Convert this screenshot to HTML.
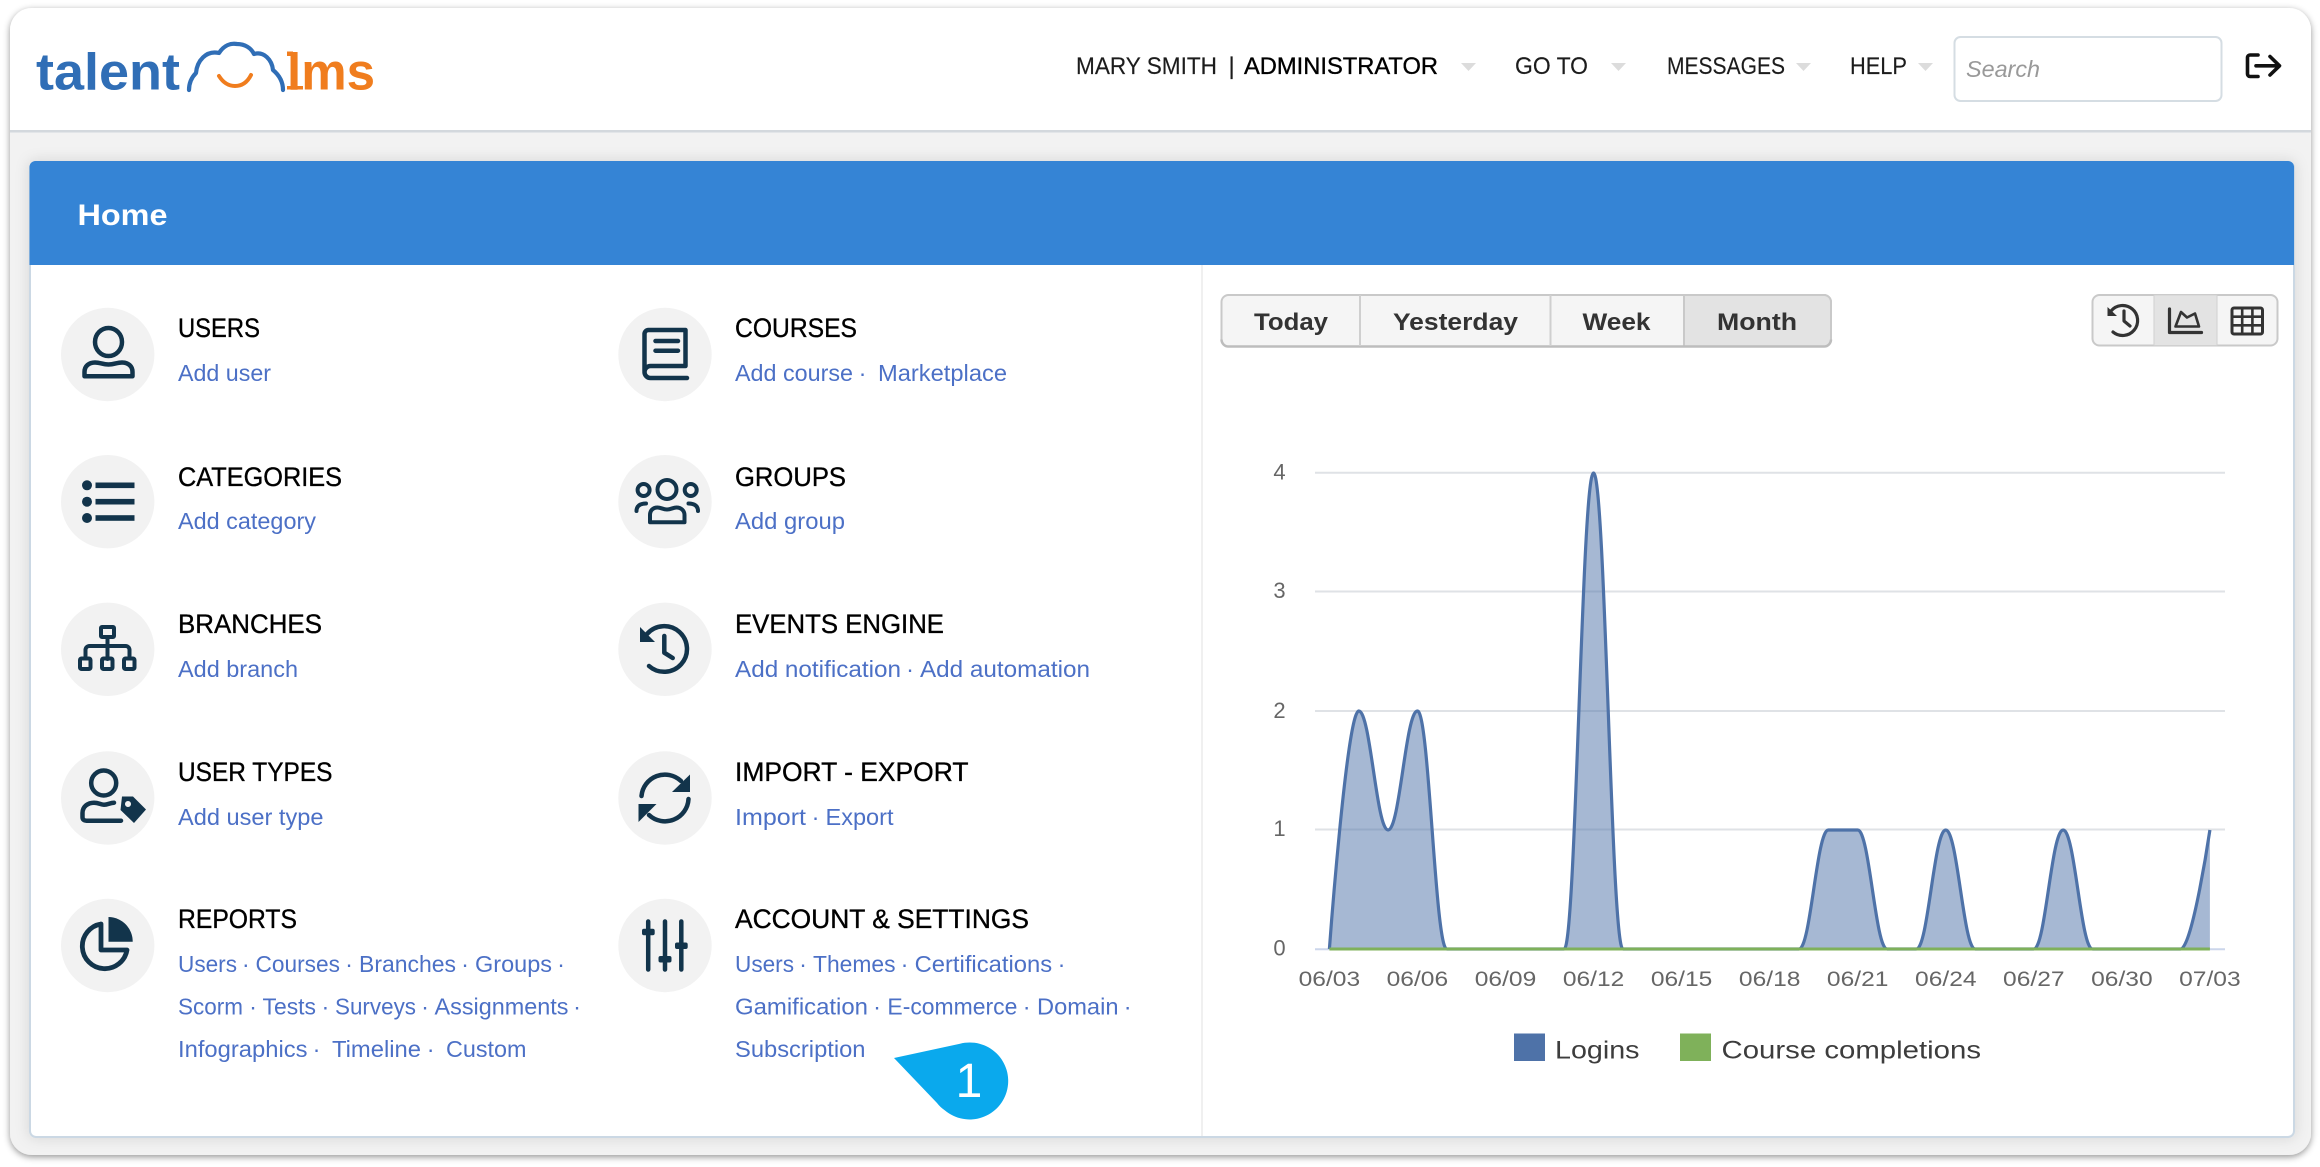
<!DOCTYPE html>
<html lang="en">
<head>
<meta charset="utf-8">
<title>TalentLMS Home</title>
<style>
html,body{margin:0;padding:0;background:#fff;width:2320px;height:1167px;overflow:hidden}
svg{display:block}
text{font-family:"Liberation Sans",Arial,sans-serif}
.t{font-size:26.5px;fill:#000;stroke:#000;stroke-width:.35px}
.l{font-size:23.5px;fill:#4c70c6}
.d{font-size:23.5px;fill:#4c70c6;text-anchor:middle}
.h{font-size:24.5px;fill:#1c1c1c;stroke:#1c1c1c;stroke-width:.15px}
.b{font-size:24px;font-weight:700;fill:#333}
.a{font-size:21px;fill:#666;text-anchor:middle}
.y{font-size:22px;fill:#666;text-anchor:middle}
.g{font-size:25px;fill:#3d3d3d}
.ic{fill:none;stroke:#12344b;stroke-width:4.5;stroke-linecap:round;stroke-linejoin:round}
.if{fill:#12344b;stroke:none}
.circ{fill:#f2f2f2}
.sm{fill:none;stroke:#333;stroke-width:3.2;stroke-linecap:round;stroke-linejoin:round}
</style>
</head>
<body>
<svg xmlns="http://www.w3.org/2000/svg" width="2320" height="1167" viewBox="0 0 2320 1167">
<defs>
<filter id="ws" x="-2%" y="-3%" width="104%" height="106%"><feDropShadow dx="0" dy="2" stdDeviation="3.5" flood-color="#000" flood-opacity=".42"/></filter>
<filter id="ps" x="-2%" y="-4%" width="104%" height="108%"><feDropShadow dx="0" dy="0" stdDeviation="7" flood-color="#000" flood-opacity=".13"/></filter>
</defs>

<!-- window -->
<rect x="10" y="8" width="2301" height="1147" rx="22" fill="#f2f2f2" filter="url(#ws)"/>
<path d="M10 130V30a22 22 0 0 1 22-22H2289a22 22 0 0 1 22 22V130Z" fill="#fff"/>
<rect x="10" y="130" width="2301" height="2.5" fill="#d3d8dd"/>

<!-- logo -->
<text x="36" y="89.5" font-size="52" font-weight="700" fill="#306eb6" textLength="144" lengthAdjust="spacingAndGlyphs">talent</text>
<text x="287" y="89.5" font-size="52" font-weight="700" fill="#f07d1e" textLength="88" lengthAdjust="spacingAndGlyphs">lms</text>
<path d="M287 51.500H293V56H287ZM287 86H303V89.500H287Z" fill="#f07d1e"/>
<path d="M189 90C189 82 192 77 196 73C197 61 206 50 219 53C224 45 231 43 237 44C245 44 251 48 254 54C264 51 272 60 273 70C279 75 283 82 283 90" fill="none" stroke="#306eb6" stroke-width="4.2" stroke-linecap="round" stroke-linejoin="round"/>
<path d="M219 76C224 84 230 86 235 86C241 86 247 83 251 75" fill="none" stroke="#f07d1e" stroke-width="4" stroke-linecap="round"/>

<!-- top nav -->
<text class="h" x="1076" y="74" textLength="141" lengthAdjust="spacingAndGlyphs">MARY SMITH</text>
<text class="h" x="1231.5" y="74" text-anchor="middle" fill="#1a2a5a">|</text>
<text class="h" x="1244" y="74" textLength="194" lengthAdjust="spacingAndGlyphs" style="fill:#000;stroke:#000;stroke-width:.35px">ADMINISTRATOR</text>
<polygon points="1461,63 1476,63 1468.5,71" fill="#dcdcdc"/>
<text class="h" x="1515" y="74" textLength="73" lengthAdjust="spacingAndGlyphs">GO TO</text>
<polygon points="1611,63 1626,63 1618.5,71" fill="#dcdcdc"/>
<text class="h" x="1667" y="74" textLength="118" lengthAdjust="spacingAndGlyphs">MESSAGES</text>
<polygon points="1796,63 1811,63 1803.5,71" fill="#dcdcdc"/>
<text class="h" x="1850" y="74" textLength="57" lengthAdjust="spacingAndGlyphs">HELP</text>
<polygon points="1918,63 1933,63 1925.5,71" fill="#dcdcdc"/>
<rect x="1954.5" y="37" width="267" height="64" rx="6" fill="#fff" stroke="#d5dde3" stroke-width="2"/>
<text x="1966" y="77" font-size="23" font-style="italic" fill="#999" textLength="74" lengthAdjust="spacingAndGlyphs">Search</text>
<path d="M2258 55H2250a2.500 2.500 0 0 0-2.500 2.500V74a2.500 2.500 0 0 0 2.500 2.500H2258" fill="none" stroke="#111" stroke-width="3.600" stroke-linecap="round"/>
<path d="M2256 65.800H2279M2270 56.500L2279.500 65.800L2270 75" fill="none" stroke="#111" stroke-width="3.600" stroke-linecap="round" stroke-linejoin="round"/>

<!-- panel -->
<rect x="30" y="162" width="2264" height="975" rx="6" fill="#fff" stroke="#cbd8e4" stroke-width="2" filter="url(#ps)"/>
<path d="M29.500 265V167a6 6 0 0 1 6-6H2288a6 6 0 0 1 6 6V265Z" fill="#3584d5"/>
<text x="77.500" y="225" font-size="30" font-weight="700" fill="#fff" textLength="90" lengthAdjust="spacingAndGlyphs">Home</text>
<rect x="1201" y="265" width="2" height="871" fill="#f0f0f0"/>

<!-- icon circles -->
<g class="circ">
<circle cx="107.700" cy="354.500" r="46.700"/><circle cx="107.700" cy="501.700" r="46.700"/><circle cx="107.700" cy="649.300" r="46.700"/><circle cx="107.700" cy="798" r="46.700"/><circle cx="107.700" cy="945.500" r="46.700"/>
<circle cx="665" cy="354.500" r="46.700"/><circle cx="665" cy="501.700" r="46.700"/><circle cx="665" cy="649.300" r="46.700"/><circle cx="665" cy="798" r="46.700"/><circle cx="665" cy="945.500" r="46.700"/>
</g>

<!-- users -->
<ellipse class="ic" cx="108.500" cy="342" rx="13.500" ry="14"/>
<path class="ic" d="M84.500 376.300H132.500V372C132.500 366 128 362.500 122 362.500C117 362.500 114 364.500 108.500 364.500C103 364.500 100 362.500 95 362.500C89 362.500 84.500 366 84.500 372Z"/>
<!-- categories -->
<circle class="if" cx="87" cy="485.300" r="5"/><circle class="if" cx="87" cy="501.700" r="5"/><circle class="if" cx="87" cy="518" r="5"/>
<rect class="if" x="95.500" y="482.500" width="39" height="5.600"/><rect class="if" x="95.500" y="498.900" width="39" height="5.600"/><rect class="if" x="95.500" y="515.200" width="39" height="5.600"/>
<!-- branches -->
<g class="ic" style="stroke-width:4">
<rect x="101" y="627" width="13" height="10" rx="1"/>
<path d="M107.500 638V659M85.500 656V650a4 4 0 0 1 4-4H125.500a4 4 0 0 1 4 4V656"/>
<rect x="80" y="658.500" width="10.500" height="10.500" rx="1.500"/><rect x="102" y="658.500" width="10.500" height="10.500" rx="1.500"/><rect x="124" y="658.500" width="10.500" height="10.500" rx="1.500"/>
</g>
<!-- user types -->
<circle class="ic" cx="103.700" cy="783" r="12.500"/>
<path class="ic" d="M121 820.700H86.500Q82.500 820.700 82.500 817V813C82.500 806.500 88 802.700 94 802.700C99 802.700 100 804.700 104 804.700C108 804.700 110 802.700 114 802.700"/>
<path class="if" d="M122 796.500H133L146 809.500L134 823L120.500 810ZM128 801a3 3 0 1 0 .01 0Z" fill-rule="evenodd"/>
<!-- reports -->
<path class="ic" d="M101 924A22.500 22.500 0 1 0 127 950H101V924" style="stroke-width:4.800"/>
<path class="if" d="M108.500 917A24.500 24.500 0 0 1 132.700 941.800H108.500Z"/>
<!-- courses -->
<path class="ic" d="M644.500 371V334a4 4 0 0 1 4-4H685.500V366H650.500a6 6 0 0 0-6 6a6 6 0 0 0 6 6H687"/>
<path class="ic" d="M655.500 341H678M655.500 350.700H678"/>
<!-- groups -->
<g class="ic" style="stroke-width:4">
<circle cx="667" cy="489.500" r="9.500"/><circle cx="643.600" cy="490" r="6"/><circle cx="690.700" cy="490" r="6"/>
<path d="M650 522.300H684.500V515C684.500 510.500 681 507.500 676.500 507.500C673 507.500 671 509.500 667 509.500C663 509.500 661 507.500 657.500 507.500C653 507.500 650 510.500 650 515Z"/>
<path d="M636.500 511C636.500 506 640 503.500 646 503.500M698 511C698 506 694.500 503.500 688.500 503.500"/>
</g>
<!-- events clock -->
<path class="ic" d="M647 634A22.800 22.800 0 1 1 649 666"/>
<polygon class="if" points="640,627 640,642 655,642"/>
<path class="ic" d="M664.300 636V652.700L672.700 658"/>
<!-- import export -->
<path class="ic" d="M641.500 796A23.500 23.500 0 0 1 681 781"/>
<polygon class="if" points="690,774.500 690,792 672,792"/>
<path class="ic" d="M688.500 799A23.500 23.500 0 0 1 649 815"/>
<polygon class="if" points="638.500,822 638.500,804 656.500,804"/>
<!-- sliders -->
<path class="ic" d="M648.200 921.500V969.500M665 921.500V969.500M681.300 921.500V969.500"/>
<rect class="if" x="642" y="928.700" width="12.700" height="6.500" rx="2"/>
<rect class="if" x="658.500" y="956" width="13" height="6.500" rx="2"/>
<rect class="if" x="675" y="942.500" width="12.700" height="6.500" rx="2"/>

<!-- column 1 -->
<text class="t" x="178" y="337" textLength="82" lengthAdjust="spacingAndGlyphs">USERS</text>
<text class="l" x="178" y="381" textLength="93" lengthAdjust="spacingAndGlyphs">Add user</text>
<text class="t" x="178" y="486" textLength="164" lengthAdjust="spacingAndGlyphs">CATEGORIES</text>
<text class="l" x="178" y="529" textLength="138" lengthAdjust="spacingAndGlyphs">Add category</text>
<text class="t" x="178" y="633" textLength="144" lengthAdjust="spacingAndGlyphs">BRANCHES</text>
<text class="l" x="178" y="677" textLength="120" lengthAdjust="spacingAndGlyphs">Add branch</text>
<text class="t" x="178" y="781" textLength="154.500" lengthAdjust="spacingAndGlyphs">USER TYPES</text>
<text class="l" x="178" y="825" textLength="145.500" lengthAdjust="spacingAndGlyphs">Add user type</text>
<text class="t" x="178" y="928" textLength="119" lengthAdjust="spacingAndGlyphs">REPORTS</text>

<text class="l" x="178" y="972" textLength="59" lengthAdjust="spacingAndGlyphs">Users</text><text class="d" x="245.800" y="972">·</text>
<text class="l" x="255.500" y="972" textLength="84.500" lengthAdjust="spacingAndGlyphs">Courses</text><text class="d" x="349" y="972">·</text>
<text class="l" x="359" y="972" textLength="97" lengthAdjust="spacingAndGlyphs">Branches</text><text class="d" x="465" y="972">·</text>
<text class="l" x="475" y="972" textLength="77" lengthAdjust="spacingAndGlyphs">Groups</text><text class="d" x="561" y="972">·</text>

<text class="l" x="178" y="1014.500" textLength="65" lengthAdjust="spacingAndGlyphs">Scorm</text><text class="d" x="253" y="1014.500">·</text>
<text class="l" x="262.500" y="1014.500" textLength="53.500" lengthAdjust="spacingAndGlyphs">Tests</text><text class="d" x="325.400" y="1014.500">·</text>
<text class="l" x="335" y="1014.500" textLength="81" lengthAdjust="spacingAndGlyphs">Surveys</text><text class="d" x="425" y="1014.500">·</text>
<text class="l" x="434.500" y="1014.500" textLength="134" lengthAdjust="spacingAndGlyphs">Assignments</text><text class="d" x="577" y="1014.500">·</text>

<text class="l" x="178" y="1057" textLength="129.500" lengthAdjust="spacingAndGlyphs">Infographics</text><text class="d" x="316.600" y="1057">·</text>
<text class="l" x="332" y="1057" textLength="89" lengthAdjust="spacingAndGlyphs">Timeline</text><text class="d" x="430.700" y="1057">·</text>
<text class="l" x="446" y="1057" textLength="80.500" lengthAdjust="spacingAndGlyphs">Custom</text>

<!-- column 2 -->
<text class="t" x="735" y="337" textLength="122" lengthAdjust="spacingAndGlyphs">COURSES</text>
<text class="l" x="735" y="381" textLength="118" lengthAdjust="spacingAndGlyphs">Add course</text><text class="d" x="862.500" y="381">·</text>
<text class="l" x="878" y="381" textLength="129" lengthAdjust="spacingAndGlyphs">Marketplace</text>
<text class="t" x="735" y="486" textLength="111" lengthAdjust="spacingAndGlyphs">GROUPS</text>
<text class="l" x="735" y="529" textLength="110" lengthAdjust="spacingAndGlyphs">Add group</text>
<text class="t" x="735" y="633" textLength="209" lengthAdjust="spacingAndGlyphs">EVENTS ENGINE</text>
<text class="l" x="735" y="677" textLength="166" lengthAdjust="spacingAndGlyphs">Add notification</text><text class="d" x="910" y="677">·</text>
<text class="l" x="920" y="677" textLength="170" lengthAdjust="spacingAndGlyphs">Add automation</text>
<text class="t" x="735" y="781" textLength="233.500" lengthAdjust="spacingAndGlyphs">IMPORT - EXPORT</text>
<text class="l" x="735" y="825" textLength="71" lengthAdjust="spacingAndGlyphs">Import</text><text class="d" x="815.500" y="825">·</text>
<text class="l" x="825.500" y="825" textLength="68" lengthAdjust="spacingAndGlyphs">Export</text>
<text class="t" x="735" y="928" textLength="294" lengthAdjust="spacingAndGlyphs">ACCOUNT &amp; SETTINGS</text>

<text class="l" x="735" y="972" textLength="59" lengthAdjust="spacingAndGlyphs">Users</text><text class="d" x="803" y="972">·</text>
<text class="l" x="813" y="972" textLength="82.500" lengthAdjust="spacingAndGlyphs">Themes</text><text class="d" x="904.600" y="972">·</text>
<text class="l" x="914.600" y="972" textLength="137.500" lengthAdjust="spacingAndGlyphs">Certifications</text><text class="d" x="1061.500" y="972">·</text>

<text class="l" x="735" y="1014.500" textLength="133" lengthAdjust="spacingAndGlyphs">Gamification</text><text class="d" x="877" y="1014.500">·</text>
<text class="l" x="887.400" y="1014.500" textLength="130" lengthAdjust="spacingAndGlyphs">E-commerce</text><text class="d" x="1026.700" y="1014.500">·</text>
<text class="l" x="1037" y="1014.500" textLength="81.500" lengthAdjust="spacingAndGlyphs">Domain</text><text class="d" x="1127.700" y="1014.500">·</text>

<text class="l" x="735" y="1057" textLength="130.500" lengthAdjust="spacingAndGlyphs">Subscription</text>

<!-- callout -->
<path d="M894 1058L960 1043.700A38.500 38.500 0 1 1 945 1110.500Q940 1107 937 1103Z" fill="#0aa9ed"/>
<text x="969" y="1097" font-size="48" fill="#fff" text-anchor="middle">1</text>

<!-- range buttons -->
<rect x="1221.500" y="295" width="609.500" height="51.500" rx="7" fill="#f5f5f5" stroke="#c9c9c9" stroke-width="2"/>
<path d="M1684 295H1824a7 7 0 0 1 7 7V339.500a7 7 0 0 1-7 7H1684Z" fill="#e3e3e3" stroke="#c9c9c9" stroke-width="2"/>
<path d="M1221.500 339.500a7 7 0 0 0 7 7H1824a7 7 0 0 0 7-7" fill="none" stroke="#bdbdbd" stroke-width="2.500"/>
<rect x="1359" y="295" width="2" height="51" fill="#cfcfcf"/><rect x="1549.500" y="295" width="2" height="51" fill="#cfcfcf"/>
<text class="b" x="1254" y="330" textLength="74" lengthAdjust="spacingAndGlyphs">Today</text>
<text class="b" x="1393" y="330" textLength="125" lengthAdjust="spacingAndGlyphs">Yesterday</text>
<text class="b" x="1582.500" y="330" textLength="68" lengthAdjust="spacingAndGlyphs">Week</text>
<text class="b" x="1717" y="330" textLength="80" lengthAdjust="spacingAndGlyphs">Month</text>

<!-- chart-type buttons -->
<rect x="2092.500" y="295" width="185" height="50.500" rx="7" fill="#f5f5f5" stroke="#c9c9c9" stroke-width="2"/>
<rect x="2154" y="295" width="63" height="50.500" fill="#e3e3e3" stroke="#d0d0d0" stroke-width="1"/>
<path class="sm" d="M2111 311A15 15 0 1 1 2113 332"/>
<polygon points="2107.500,307 2107.500,316 2117,316" fill="#333"/>
<path class="sm" d="M2124 311V321L2130 326"/>
<path class="sm" d="M2169.500 309V332.500H2201.500"/>
<path class="sm" d="M2175.500 326.500L2181 312L2187 317.500L2195 313.500L2199 326.500Z" style="stroke-width:2.600"/>
<rect x="2232" y="308" width="30.500" height="26" rx="2" fill="none" stroke="#333" stroke-width="3"/>
<path d="M2242.200 308V334M2252.400 308V334M2232 316.700H2262.500M2232 325.300H2262.500" fill="none" stroke="#333" stroke-width="2.600"/>

<!-- chart grid -->
<g fill="none" stroke="#dfe2e6" stroke-width="2">
<path d="M1315 472.800H2225M1315 591.500H2225M1315 711H2225M1315 829.500H2225"/>
</g>
<path d="M1315 949.300H2225" fill="none" stroke="#ccd6eb" stroke-width="2"/>

<text class="y" x="1279.500" y="479.500">4</text>
<text class="y" x="1279.500" y="598">3</text>
<text class="y" x="1279.500" y="718">2</text>
<text class="y" x="1279.500" y="836">1</text>
<text class="y" x="1279.500" y="955.500">0</text>

<g>
<text class="a" x="1329.400" y="986" textLength="61.500" lengthAdjust="spacingAndGlyphs">06/03</text>
<text class="a" x="1417.400" y="986" textLength="61.500" lengthAdjust="spacingAndGlyphs">06/06</text>
<text class="a" x="1505.500" y="986" textLength="61.500" lengthAdjust="spacingAndGlyphs">06/09</text>
<text class="a" x="1593.600" y="986" textLength="61.500" lengthAdjust="spacingAndGlyphs">06/12</text>
<text class="a" x="1681.600" y="986" textLength="61.500" lengthAdjust="spacingAndGlyphs">06/15</text>
<text class="a" x="1769.700" y="986" textLength="61.500" lengthAdjust="spacingAndGlyphs">06/18</text>
<text class="a" x="1857.700" y="986" textLength="61.500" lengthAdjust="spacingAndGlyphs">06/21</text>
<text class="a" x="1945.800" y="986" textLength="61.500" lengthAdjust="spacingAndGlyphs">06/24</text>
<text class="a" x="2033.800" y="986" textLength="61.500" lengthAdjust="spacingAndGlyphs">06/27</text>
<text class="a" x="2121.900" y="986" textLength="61.500" lengthAdjust="spacingAndGlyphs">06/30</text>
<text class="a" x="2209.900" y="986" textLength="61.500" lengthAdjust="spacingAndGlyphs">07/03</text>
</g>

<path d="M1329.400 949C1329.400 949 1347 711 1358.750 711C1370.490 711 1376.360 830 1388.100 830C1399.840 830 1405.710 711 1417.450 711C1429.190 711 1435.060 949 1446.800 949L1564.200 949C1575.940 949 1581.810 473 1593.550 473C1605.290 473 1611.160 949 1622.900 949L1799 949C1810.740 949 1816.610 830 1828.350 830L1857.700 830C1869.440 830 1875.310 949 1887.050 949L1916.400 949C1928.140 949 1934.010 830 1945.750 830C1957.490 830 1963.360 949 1975.100 949L2033.800 949C2045.540 949 2051.410 830 2063.150 830C2074.890 830 2080.760 949 2092.500 949L2180.550 949C2192.290 949 2209.900 830 2209.900 830V949Z" fill="#4e72a8" fill-opacity=".5"/>
<path d="M1329.400 949C1329.400 949 1347 711 1358.750 711C1370.490 711 1376.360 830 1388.100 830C1399.840 830 1405.710 711 1417.450 711C1429.190 711 1435.060 949 1446.800 949L1564.200 949C1575.940 949 1581.810 473 1593.550 473C1605.290 473 1611.160 949 1622.900 949L1799 949C1810.740 949 1816.610 830 1828.350 830L1857.700 830C1869.440 830 1875.310 949 1887.050 949L1916.400 949C1928.140 949 1934.010 830 1945.750 830C1957.490 830 1963.360 949 1975.100 949L2033.800 949C2045.540 949 2051.410 830 2063.150 830C2074.890 830 2080.760 949 2092.500 949L2180.550 949C2192.290 949 2209.900 830 2209.900 830" fill="none" stroke="#4e72a8" stroke-width="3.200" stroke-linejoin="round"/>
<path d="M1329.400 949H2209.900" fill="none" stroke="#7fb15a" stroke-width="3"/>

<!-- legend -->
<rect x="1514" y="1033.500" width="31" height="27.500" fill="#4e72a8"/>
<text class="g" x="1555" y="1058.700" textLength="84.500" lengthAdjust="spacingAndGlyphs">Logins</text>
<rect x="1680" y="1033.500" width="31" height="27.500" fill="#7fb15a"/>
<text class="g" x="1721.500" y="1058.700" textLength="259.500" lengthAdjust="spacingAndGlyphs">Course completions</text>
</svg>
</body>
</html>
